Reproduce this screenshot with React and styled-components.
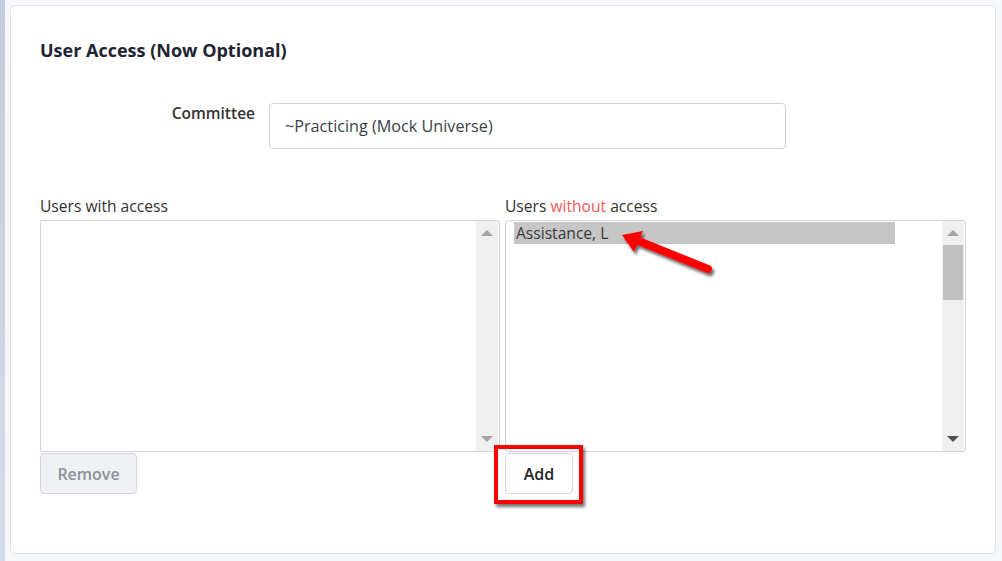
import React from "react";
import styled, { createGlobalStyle } from "styled-components";

const Global = createGlobalStyle`
  html, body {
    margin: 0;
    padding: 0;
    background: #f5f7fa;
    font-family: "Open Sans", "Noto Sans", sans-serif;
  }
`;

const Page = styled.div`
  position: relative;
  display: flex;
  width: 1002px;
  height: 561px;
  overflow: hidden;
`;

const Strip = styled.div`
  width: 5px;
  flex-shrink: 0;
  background: linear-gradient(#c3cbdc, #d5ddeb);
`;

const Card = styled.div`
  box-sizing: border-box;
  margin: 5px 0 0 5px;
  width: 986px;
  height: 549px;
  background: #fff;
  border: 1px solid #dde1e6;
  border-radius: 5px;
  padding: 32px 29px 0 29px;
`;

const Title = styled.h3`
  margin: 0;
  font-size: 18px;
  line-height: 24px;
  font-weight: 700;
  color: #1e2431;
`;

const FieldRow = styled.div`
  display: flex;
  align-items: flex-start;
  margin-top: 40px;
  gap: 14px;
`;

const FieldLabel = styled.label`
  width: 215px;
  text-align: right;
  font-size: 15.5px;
  font-weight: 600;
  color: #333;
  line-height: 22px;
`;

const TextInput = styled.div`
  box-sizing: border-box;
  width: 517px;
  height: 46px;
  margin-top: 1px;
  border: 1px solid #ced4da;
  border-radius: 4px;
  padding: 0 15px;
  display: flex;
  align-items: center;
  font-size: 16.2px;
  color: #3c4148;
`;

const Lists = styled.div`
  display: grid;
  grid-template-columns: 460px 461px;
  column-gap: 5px;
  margin-top: 47px;
`;

const Column = styled.div`
  display: flex;
  flex-direction: column;
`;

const ListLabel = styled.div`
  font-size: 15.6px;
  line-height: 20px;
  color: #333;
  margin-bottom: 4px;
`;

const Warn = styled.span`
  color: #f45b5b;
`;

const ListBox = styled.div`
  box-sizing: border-box;
  height: 232px;
  border: 1px solid #ced4da;
  border-radius: 3px;
  display: flex;
  overflow: hidden;
`;

const Options = styled.div`
  flex: 1;
  padding: 1px 0 0 8px;
`;

const Option = styled.div`
  width: 381px;
  height: 22px;
  line-height: 22px;
  padding-left: 2px;
  box-sizing: border-box;
  background: ${(p) => (p.$selected ? "#c6c6c6" : "transparent")};
  font-size: 15.6px;
  color: #3a3a3a;
`;

const Scrollbar = styled.div`
  width: 22px;
  margin-right: 1px;
  background: #f0f0f0;
  display: flex;
  flex-direction: column;
  align-items: center;
`;

const ArrowBtn = styled.div`
  height: 24px;
  width: 100%;
  display: flex;
  align-items: center;
  justify-content: center;
  &::after {
    content: "";
    border-left: 6px solid transparent;
    border-right: 6px solid transparent;
    ${(p) =>
      p.$down
        ? `border-top: 6px solid ${p.$dark ? "#505050" : "#a3a3a3"};`
        : `border-bottom: 6px solid ${p.$dark ? "#505050" : "#a3a3a3"};`}
  }
`;

const Track = styled.div`
  flex: 1;
  width: 100%;
  display: flex;
  justify-content: center;
`;

const Thumb = styled.div`
  width: 20px;
  height: 55px;
  background: #c1c1c1;
`;

const Button = styled.button`
  margin-top: 1px;
  align-self: flex-start;
  box-sizing: border-box;
  height: 41px;
  width: ${(p) => p.$w}px;
  border-radius: 4px;
  border: 1px solid ${(p) => (p.$disabled ? "#d3d7dc" : "#d6d9dd")};
  background: ${(p) => (p.$disabled ? "#f0f1f3" : "#fff")};
  color: ${(p) => (p.$disabled ? "#8a929b" : "#212529")};
  font-family: inherit;
  font-size: 16px;
  font-weight: 600;
  padding: 0;
`;

const Highlight = styled.div`
  position: absolute;
  left: 494px;
  top: 445px;
  width: 89px;
  height: 59px;
  box-sizing: border-box;
  border: 4px solid #ff0000;
  box-shadow: 2px 3px 3px rgba(0, 0, 0, 0.55);
`;

const Overlay = styled.svg`
  position: absolute;
  left: 0;
  top: 0;
  pointer-events: none;
`;

function FakeScroll({ thumb }) {
  return (
    <Scrollbar>
      <ArrowBtn />
      <Track>{thumb && <Thumb />}</Track>
      <ArrowBtn $down $dark={thumb} />
    </Scrollbar>
  );
}

export default function App() {
  return (
    <>
      <Global />
      <Page>
        <Strip />
        <Card>
          <Title>User Access (Now Optional)</Title>
          <FieldRow>
            <FieldLabel>Committee</FieldLabel>
            <TextInput>~Practicing (Mock Universe)</TextInput>
          </FieldRow>
          <Lists>
            <Column>
              <ListLabel>Users with access</ListLabel>
              <ListBox>
                <Options />
                <FakeScroll />
              </ListBox>
              <Button $disabled $w={97}>Remove</Button>
            </Column>
            <Column>
              <ListLabel>
                Users <Warn>without</Warn> access
              </ListLabel>
              <ListBox>
                <Options>
                  <Option $selected>Assistance, L</Option>
                </Options>
                <FakeScroll thumb />
              </ListBox>
              <Button $w={68}>Add</Button>
            </Column>
          </Lists>
        </Card>
        <Highlight />
        <Overlay width="1002" height="561" viewBox="0 0 1002 561">
          <defs>
            <filter id="sh" x="-20%" y="-40%" width="140%" height="180%">
              <feDropShadow dx="2" dy="3" stdDeviation="1.6" floodColor="#000" floodOpacity="0.6" />
            </filter>
          </defs>
          <g filter="url(#sh)" fill="#ff0000">
            <line x1="708" y1="269" x2="636" y2="240" stroke="#ff0000" strokeWidth="8" strokeLinecap="round" />
            <polygon points="622,235 643,231 634,252" />
          </g>
        </Overlay>
      </Page>
    </>
  );
}
